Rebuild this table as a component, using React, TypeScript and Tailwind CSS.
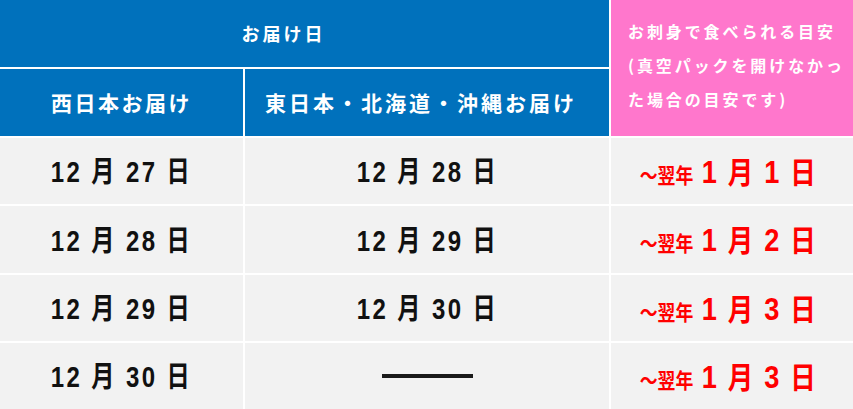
const rows = [
  { west: ['12', '27'], east: ['12', '28'], eat: '1' },
  { west: ['12', '28'], east: ['12', '29'], eat: '2' },
  { west: ['12', '29'], east: ['12', '30'], eat: '3' },
  { west: ['12', '30'], east: null, eat: '3' },
]

const numFont = "font-['Liberation_Sans','Noto_Sans_CJK_JP',sans-serif]"
const jpFont = "font-['Noto_Sans_CJK_JP',sans-serif]"

function DateText({ m, d }: { m: string; d: string }) {
  return (
    <span className={`inline-block scale-x-[0.8] whitespace-nowrap ${numFont} text-[30px] font-bold tracking-[3px] text-[#111] leading-none`}>
      {m} <span className={`${jpFont} text-[29px]`}>月</span> {d} <span className={`${jpFont} text-[29px]`}>日</span>
    </span>
  )
}

export default function App() {
  return (
    <div className="w-[853px] h-[409px] bg-white overflow-hidden">
      <div className="grid grid-cols-[243px_364px_242px] grid-rows-[67px_67px_66px_67px_66px_66px] gap-[2px]">
        <div className={`col-span-2 bg-[#0071bc] flex items-center justify-center pr-[42px] text-white font-bold text-[18px] tracking-[3px] ${jpFont}`}>
          お届け日
        </div>
        <div className={`row-span-2 bg-[#ff77cc] pl-[17px] pt-[14px] text-white font-bold text-[16px] leading-[34px] tracking-[2.9px] whitespace-nowrap ${jpFont}`}>
          お刺身で食べられる目安
          <br />
          (真空パックを開けなかっ
          <br />
          た場合の目安です)
        </div>
        <div className={`bg-[#0071bc] flex items-center justify-center text-white font-bold text-[21px] tracking-[2.5px] ${jpFont}`}>
          西日本お届け
        </div>
        <div className={`bg-[#0071bc] flex items-center justify-center pr-[12px] text-white font-bold text-[21px] tracking-[3px] ${jpFont}`}>
          東日本・北海道・沖縄お届け
        </div>

        {rows.map((r, i) => (
          <div key={i} className="contents">
            <div className="bg-[#f2f2f2] flex items-center justify-center">
              <DateText m={r.west[0]} d={r.west[1]} />
            </div>
            <div className="bg-[#f2f2f2] flex items-center justify-center">
              {r.east ? <DateText m={r.east[0]} d={r.east[1]} /> : <div className="w-[91px] h-[4px] bg-[#1a1a1a]" />}
            </div>
            <div className="bg-[#f2f2f2] flex items-center justify-center pr-[6px]">
              <span className="inline-block scale-x-[0.85] whitespace-nowrap text-[#ff0000] font-bold leading-none">
                <span className={`${jpFont} text-[21px]`}>～翌年</span>
                <span className={`${numFont} text-[32px] tracking-[2px] ml-[10px]`}>
                  1 <span className={`${jpFont} text-[30px]`}>月</span> {r.eat} <span className={`${jpFont} text-[30px]`}>日</span>
                </span>
              </span>
            </div>
          </div>
        ))}
      </div>
    </div>
  )
}
